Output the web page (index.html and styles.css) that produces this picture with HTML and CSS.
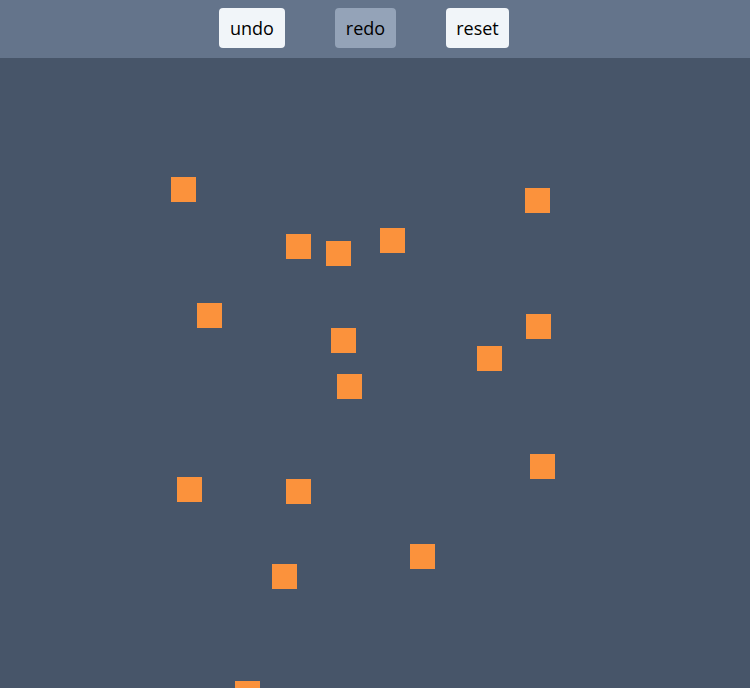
FILE: index.html
```html
<!DOCTYPE html>
<html>
<head>
<meta charset="utf-8">
<link rel="stylesheet" href="styles.css">
</head>
<body>
<header class="toolbar">
  <button class="btn btn-undo">undo</button>
  <button class="btn btn-redo btn-disabled" disabled>redo</button>
  <button class="btn btn-reset">reset</button>
</header>
<main class="canvas">
  <div class="box" style="left:171px;top:119px"></div>
  <div class="box" style="left:525px;top:130px"></div>
  <div class="box" style="left:286px;top:176px"></div>
  <div class="box" style="left:326px;top:183px"></div>
  <div class="box" style="left:380px;top:170px"></div>
  <div class="box" style="left:197px;top:245px"></div>
  <div class="box" style="left:526px;top:256px"></div>
  <div class="box" style="left:331px;top:270px"></div>
  <div class="box" style="left:477px;top:288px"></div>
  <div class="box" style="left:337px;top:316px"></div>
  <div class="box" style="left:530px;top:396px"></div>
  <div class="box" style="left:177px;top:419px"></div>
  <div class="box" style="left:286px;top:421px"></div>
  <div class="box" style="left:410px;top:486px"></div>
  <div class="box" style="left:272px;top:506px"></div>
  <div class="box" style="left:235px;top:623px"></div>
</main>
</body>
</html>
```
FILE: styles.css
```css
html, body {
  margin: 0;
  padding: 0;
  height: 100%;
  overflow: hidden;
}
body {
  background: #475569;
  font-family: "Open Sans", "Noto Sans", sans-serif;
}
.toolbar {
  height: 58px;
  box-sizing: border-box;
  background: #64748b;
  display: flex;
  justify-content: center;
  align-items: flex-start;
  gap: 50px;
  padding: 8px 22px 0 0;
}
.btn {
  height: 40px;
  padding: 0;
  border: none;
  border-radius: 4px;
  background: #f1f5f9;
  color: #000;
  font-family: inherit;
  font-size: 18px;
  line-height: 40px;
  text-align: center;
}
.btn-undo { width: 66px; }
.btn-redo { width: 61px; }
.btn-reset { width: 63px; }
.btn-disabled {
  background: #94a3b8;
}
.canvas {
  position: relative;
  height: 630px;
}
.box {
  position: absolute;
  width: 25px;
  height: 25px;
  background: #fb923c;
}
```
